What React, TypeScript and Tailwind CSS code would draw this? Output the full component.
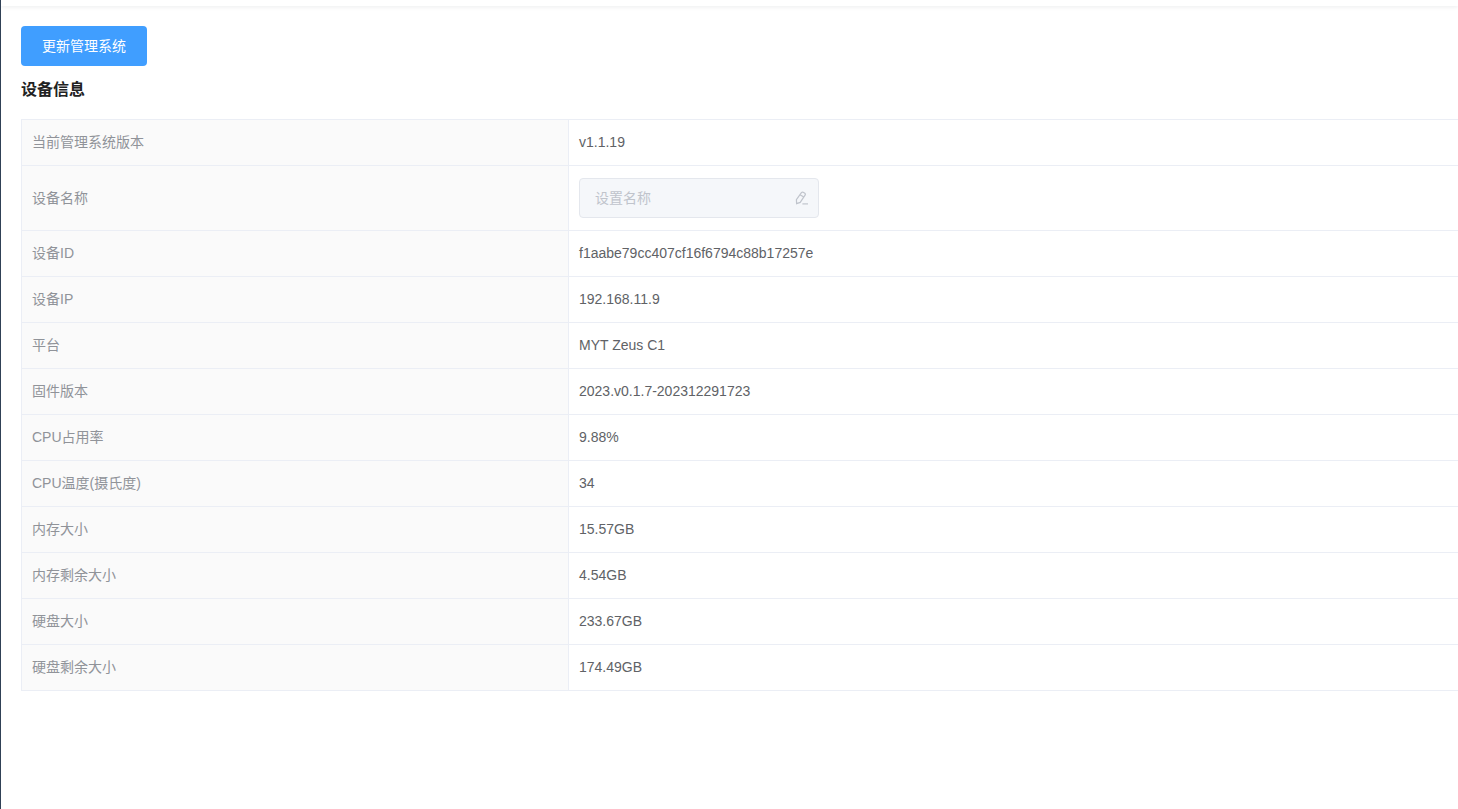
const font = { fontFamily: '"Liberation Sans", "Noto Sans CJK SC", sans-serif' };

const rows: [string, string | null][] = [
  ["当前管理系统版本", "v1.1.19"],
  ["设备名称", null],
  ["设备ID", "f1aabe79cc407cf16f6794c88b17257e"],
  ["设备IP", "192.168.11.9"],
  ["平台", "MYT Zeus C1"],
  ["固件版本", "2023.v0.1.7-202312291723"],
  ["CPU占用率", "9.88%"],
  ["CPU温度(摄氏度)", "34"],
  ["内存大小", "15.57GB"],
  ["内存剩余大小", "4.54GB"],
  ["硬盘大小", "233.67GB"],
  ["硬盘剩余大小", "174.49GB"],
];

function EditIcon() {
  return (
    <svg width="14" height="14" viewBox="0 0 14 14" fill="none" stroke="#c0c4cc" strokeWidth="1.2">
      <path d="M1.6 12.6 L1.4 8.6 L6.4 1.6 Q7.2 0.7 8.2 1.2 L9.8 2.2 Q10.7 2.9 10.2 3.9 L5.2 11.4 Z" />
      <path d="M5 3.7 L8.8 6" />
      <path d="M7.4 12.9 H13" />
    </svg>
  );
}

export default function App() {
  return (
    <div className="flex h-[809px] w-full overflow-hidden bg-white" style={font}>
      <div className="w-px shrink-0 bg-[#304156]" />
      <main className="min-w-0 flex-1 overflow-hidden">
        <div className="h-[6px] bg-white shadow-[0_1px_4px_rgba(0,21,41,0.08)]" />
        <div className="pl-5 pt-5">
          <button className="block h-10 w-[126px] rounded bg-[#409eff] text-sm text-white">更新管理系统</button>
          <h2 className="mt-[13px] h-[21px] text-base leading-[21px] font-bold text-[#222222]">设备信息</h2>
          <table className="mt-[19px] w-[1500px] table-fixed border-collapse text-sm">
            <tbody>
              {rows.map(([label, value]) => (
                <tr key={label} className={value === null ? "h-[65px]" : "h-[46px]"}>
                  <td className={`w-[547px] border border-[#ebeef5] bg-[#fafafa] pl-2.5 pr-2.5 pt-0 font-normal text-[#909399] ${value === null ? "pb-0" : "pb-0.5"}`}>{label}</td>
                  <td className={`border border-[#ebeef5] pl-2.5 pr-2.5 pt-0 text-[#606266] ${value === null ? "pb-0" : "pb-0.5"}`}>
                    {value ?? (
                      <div className="flex h-10 w-60 items-center justify-between rounded border border-[#e4e7ed] bg-[#f5f7fa] pl-[15px] pr-[9px] text-[#c0c4cc]">
                        <span>设置名称</span>
                        <EditIcon />
                      </div>
                    )}
                  </td>
                </tr>
              ))}
            </tbody>
          </table>
        </div>
      </main>
    </div>
  );
}
